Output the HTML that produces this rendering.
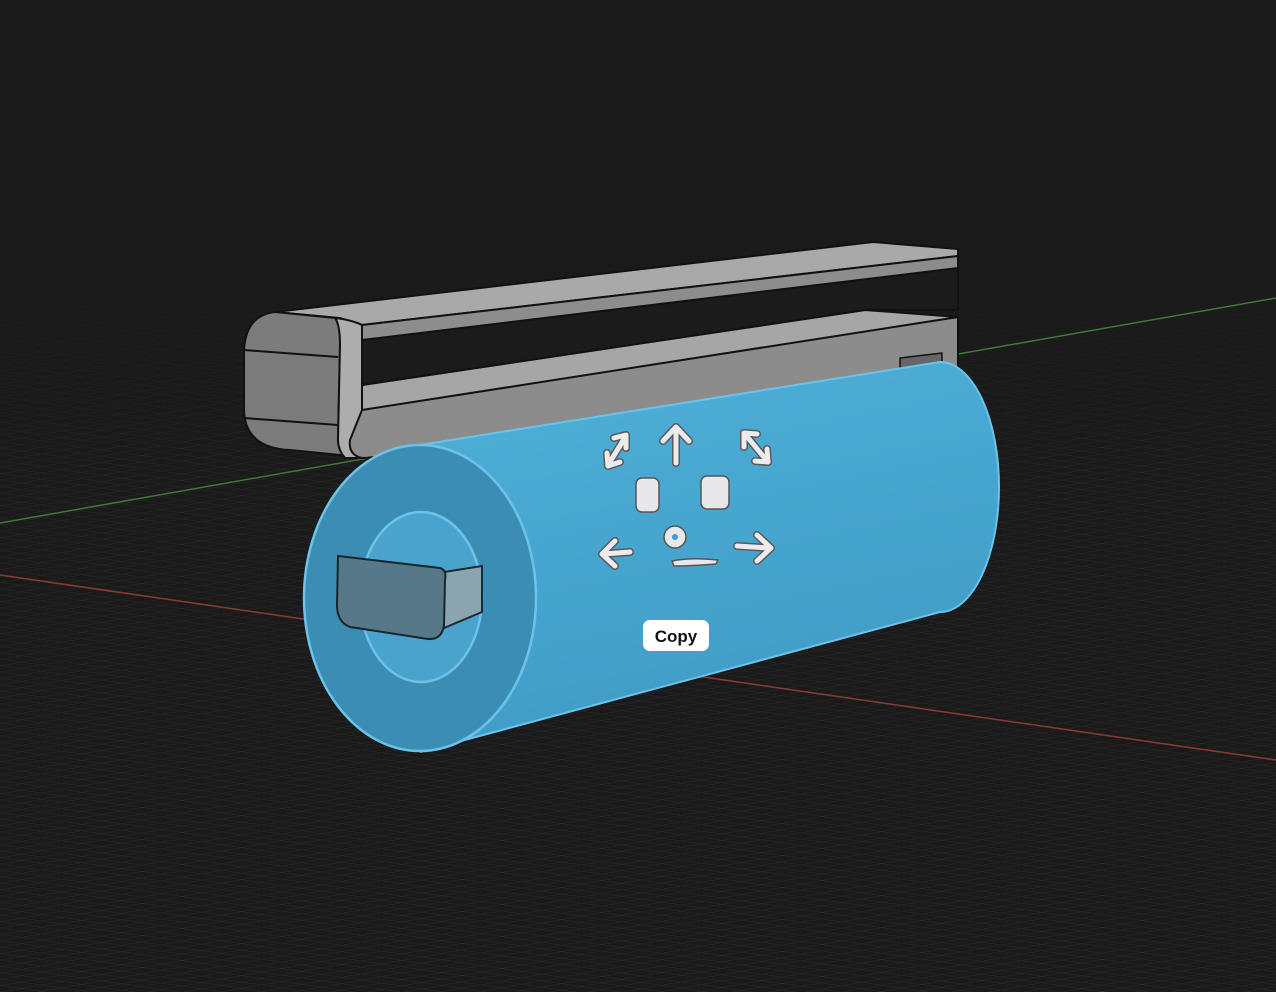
<!DOCTYPE html>
<html><head><meta charset="utf-8"><style>
html,body{margin:0;padding:0;background:#1b1b1b;width:1276px;height:992px;overflow:hidden}
svg{display:block}
</style></head><body>
<svg width="1276" height="992" viewBox="0 0 1276 992" xmlns="http://www.w3.org/2000/svg">
<defs>
<linearGradient id="cyl" x1="0" y1="0" x2="0.3" y2="1">
<stop offset="0" stop-color="#4fb0d8"/><stop offset="1" stop-color="#3f9cc6"/>
</linearGradient>
<pattern id="grid" patternUnits="userSpaceOnUse" width="10" height="10" patternTransform="matrix(2,0.29,2,-0.35,0,0)">
<path d="M0 0H10M0 0V10" stroke="#2b2b2b" stroke-width="1.6" fill="none"/>
</pattern>
<linearGradient id="fade" x1="0" y1="0" x2="0" y2="1">
<stop offset="0.25" stop-color="#fff" stop-opacity="0"/><stop offset="0.5" stop-color="#fff" stop-opacity="0.8"/><stop offset="1" stop-color="#fff" stop-opacity="1"/>
</linearGradient>
<mask id="m"><rect width="1276" height="992" fill="url(#fade)"/></mask>
</defs>
<rect width="1276" height="992" fill="#1a1a1a"/>
<rect width="1276" height="992" fill="url(#grid)" mask="url(#m)"/>
<line x1="0" y1="523" x2="1276" y2="298" stroke="#3f7a37" stroke-width="1.5"/>
<line x1="0" y1="575" x2="1276" y2="760" stroke="#8a3a35" stroke-width="1.5"/>

<!-- box -->
<g stroke="#111" stroke-width="2" stroke-linejoin="round">
<path d="M345 405 L958 317 L958 395 L365 458 Q345 458 345 440 Z" fill="#8c8c8c"/>
<path d="M362 385 L865 310 L958 317 L362 410 Z" fill="#a6a6a6"/>
<path d="M362 340 L958 268 L958 310 L865 310 L362 385 Z" fill="#1b1b1b"/>
<path d="M900 358 L942 353 L942 380 L900 386 Z" fill="#666" stroke-width="1.5"/>
<path d="M275 312 L873 242 L958 249 L958 256 L362 325 L340 318 Z" fill="#a9a9a9"/>
<path d="M362 325 L958 256 L958 268 L362 340 Z" fill="#8d8d8d"/>
<path d="M275 312 L335 318 Q350 322 340 345 L338 440 Q340 455 350 456 L290 450 Q245 448 244 410 L244 350 Q246 315 275 312 Z" fill="#7c7c7c"/>
<path d="M244 350 L338 357 M244 418 L338 425" fill="none"/>
<path d="M335 318 Q352 320 362 325 L362 410 L350 440 Q348 455 362 458 L345 458 Q338 450 338 440 L340 345 Q340 325 335 318 Z" fill="#adadad"/>
<path d="M362 325 L362 410" fill="none"/>
</g>

<!-- cylinder -->
<path d="M420 445 L940 362 A59 125 0 0 1 940 612 L420 752 Z" fill="url(#cyl)"/>
<path d="M420 445 L940 362 A59 125 0 0 1 940 612 L420 752" fill="none" stroke="#6cc3ea" stroke-width="2"/>
<ellipse cx="420" cy="598" rx="116" ry="153" fill="#3c8db3" stroke="#6cc3ea" stroke-width="2.5"/>
<ellipse cx="421" cy="597" rx="61" ry="85" fill="#4aa3cc" stroke="#6cc3ea" stroke-width="2.5"/>
<path d="M444 572 L482 566 L482 612 L444 628 Z" fill="#8aa5b0" stroke="#1a2a30" stroke-width="2"/>
<path d="M338 556 L440 568 Q447 570 445 580 L444 625 Q442 640 428 639 L350 627 Q337 622 337 605 Z" fill="#567888" stroke="#17262d" stroke-width="2"/>

<!-- gizmo -->
<g fill="none" stroke-linecap="round" stroke-linejoin="round">
<g stroke="#5a5a5a" stroke-width="8">
<path d="M676 463 L676 428 M663 441 L676 427 L689 441"/>
<path d="M630 552 L604 554 M615 541 L602 554 L615 566"/>
<path d="M737 546 L769 548 M757 535 L771 548 L757 561"/>
<path d="M608 465 L626 436 M607 453 L608 466 L620 462 M614 438 L626 435 L626 448"/>
<path d="M745 434 L767 461 M744 447 L744 433 L757 434 M755 461 L768 462 L767 449"/>
</g>
<g stroke="#ececee" stroke-width="5">
<path d="M676 463 L676 428 M663 441 L676 427 L689 441"/>
<path d="M630 552 L604 554 M615 541 L602 554 L615 566"/>
<path d="M737 546 L769 548 M757 535 L771 548 L757 561"/>
<path d="M608 465 L626 436 M607 453 L608 466 L620 462 M614 438 L626 435 L626 448"/>
<path d="M745 434 L767 461 M744 447 L744 433 L757 434 M755 461 L768 462 L767 449"/>
</g>
</g>
<g fill="#e8e8ea" stroke="#555" stroke-width="1.5">
<rect x="636" y="478" width="23" height="34" rx="6"/>
<rect x="701" y="476" width="28" height="33" rx="6"/>
<circle cx="675" cy="537" r="11"/>
<path d="M672 561 Q690 557 718 560 L716 564 Q690 566 674 566 Z"/>
</g>
<circle cx="675" cy="537" r="3" fill="#3aa0e0"/>

<rect x="643" y="620" width="66" height="31" rx="7" fill="#fff"/>
<text x="676" y="642" text-anchor="middle" font-family="Liberation Sans, sans-serif" font-weight="bold" font-size="17" fill="#111">Copy</text>
</svg>
</body></html>
